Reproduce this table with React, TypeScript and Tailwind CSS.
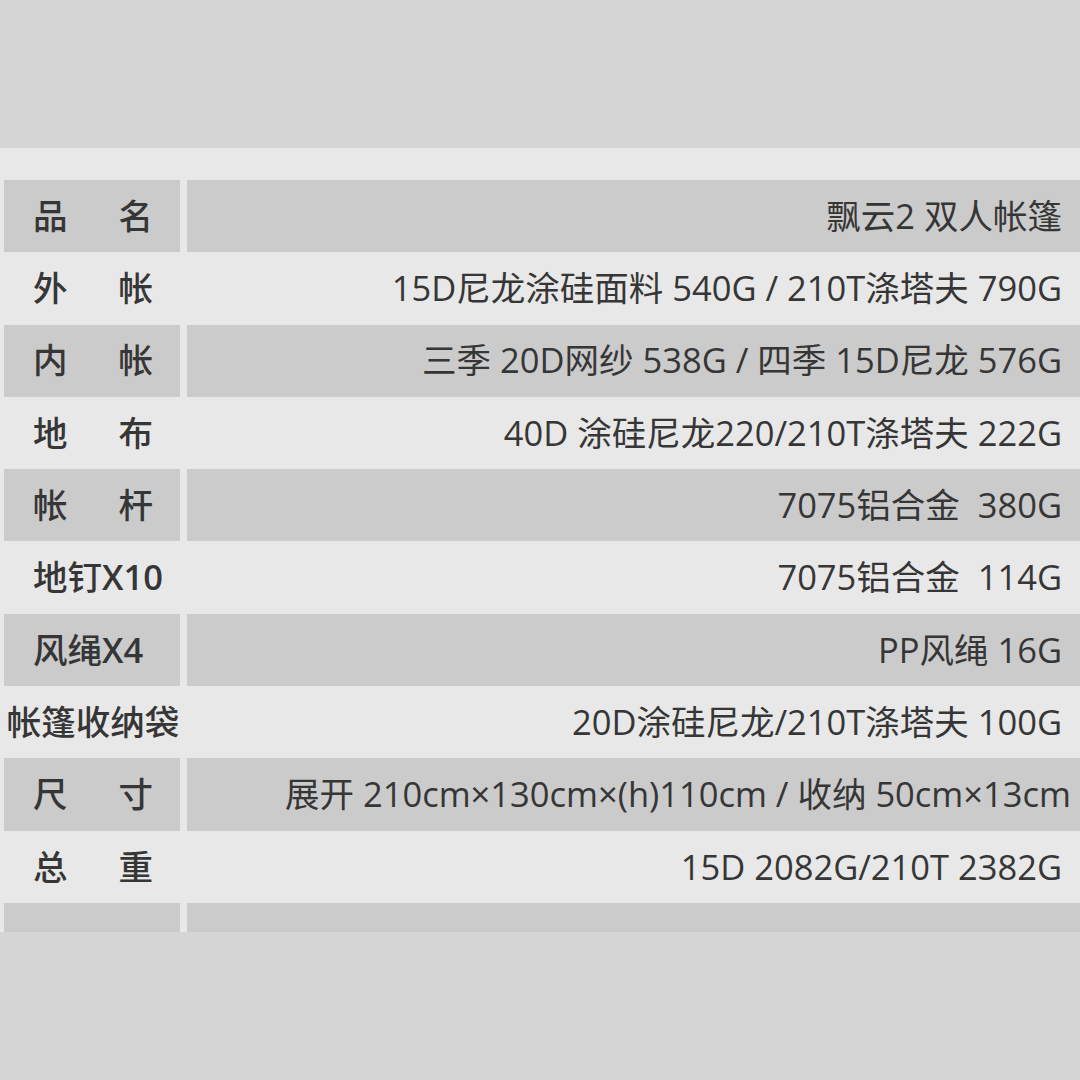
import React from 'react';

type Row = {
  label: string[];
  suffix?: string;
  value: string;
  align?: 'between' | 'start' | 'center';
};

const rows: Row[] = [
  { label: ['品', '名'], value: '飘云2 双人帐篷' },
  { label: ['外', '帐'], value: '15D尼龙涂硅面料 540G / 210T涤塔夫 790G' },
  { label: ['内', '帐'], value: '三季 20D网纱 538G / 四季 15D尼龙 576G' },
  { label: ['地', '布'], value: '40D 涂硅尼龙220/210T涤塔夫 222G' },
  { label: ['帐', '杆'], value: '7075铝合金  380G' },
  { label: ['地钉'], suffix: 'X10', value: '7075铝合金  114G', align: 'start' },
  { label: ['风绳'], suffix: 'X4', value: 'PP风绳 16G', align: 'start' },
  { label: ['帐篷收纳袋'], value: '20D涂硅尼龙/210T涤塔夫 100G', align: 'center' },
  { label: ['尺', '寸'], value: '展开 210cm×130cm×(h)110cm / 收纳 50cm×13cm' },
  { label: ['总', '重'], value: '15D 2082G/210T 2382G' },
];

const font = { fontFamily: '"Open Sans", "Noto Sans CJK SC", sans-serif' };

const SpecRow = ({ row, shaded }: { row: Row; shaded: boolean }) => {
  const align =
    row.align === 'start' ? 'justify-start' : row.align === 'center' ? 'justify-center' : 'justify-between';
  return (
    <div className="flex h-[72.3px] pl-[4px]">
      <div
        className={`flex w-[176px] shrink-0 items-center pl-[29px] pr-[27px] font-medium whitespace-nowrap ${align} ${
          shaded ? 'bg-[#cbcbcb]' : ''
        }`}
      >
        {row.label.map((l) => (
          <span key={l}>{l}</span>
        ))}
        {row.suffix && <span className="font-semibold">{row.suffix}</span>}
      </div>
      <div
        className={`ml-[7px] flex flex-1 items-center overflow-hidden pl-[98px] pr-[12px] whitespace-pre ${
          shaded ? 'bg-[#cbcbcb]' : ''
        }`}
      >
        <div className="w-full pr-[6px] text-right">{row.value}</div>
      </div>
    </div>
  );
};

export default function App() {
  return (
    <div className="flex h-[1080px] w-[1080px] flex-col overflow-hidden bg-[#d6d6d6] text-[34.5px] leading-none text-[#363636]" style={font}>
      <div className="h-[148px] shrink-0" />
      <div className="shrink-0 bg-[#e8e8e8] pt-[32px]">
        {rows.map((r, i) => (
          <SpecRow key={i} row={r} shaded={i % 2 === 0} />
        ))}
        <div className="flex h-[29px] pl-[4px]">
          <div className="w-[176px] bg-[#cbcbcb]" />
          <div className="ml-[7px] flex-1 bg-[#cbcbcb]" />
        </div>
      </div>
    </div>
  );
}
